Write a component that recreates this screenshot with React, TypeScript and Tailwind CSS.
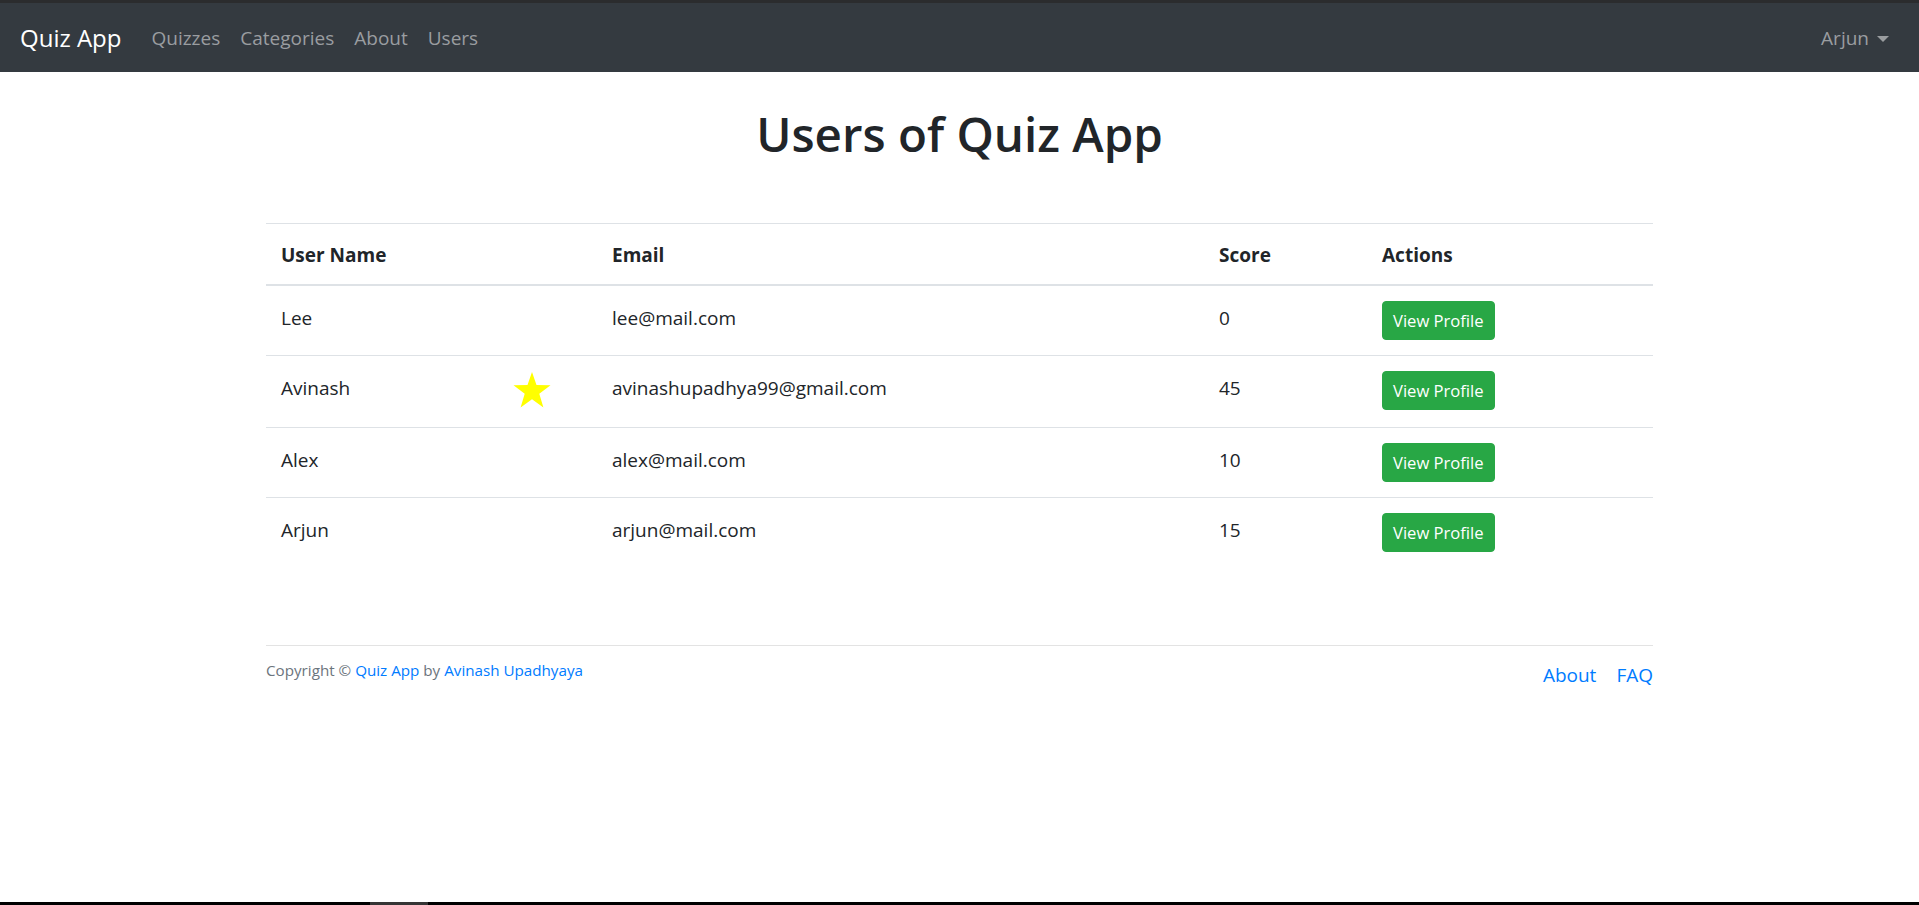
import React from "react";

const users = [
  { name: "Lee", email: "lee@mail.com", score: 0, star: false },
  { name: "Avinash", email: "avinashupadhya99@gmail.com", score: 45, star: true },
  { name: "Alex", email: "alex@mail.com", score: 10, star: false },
  { name: "Arjun", email: "arjun@mail.com", score: 15, star: false },
];

function Star() {
  return (
    <svg width="38" height="36" viewBox="0 0 38 36" className="block mt-[-1px]">
      <polygon
        points="19,0 23.5,13 37.5,13.3 26.3,21.7 30.4,35.5 19,27.3 7.6,35.5 11.7,21.7 0.5,13.3 14.5,13"
        fill="#ffff00"
      />
    </svg>
  );
}

const cell = "pt-[17px] pb-[14px] px-[15px] align-top";

export default function App() {
  return (
    <div className="min-h-[905px] flex flex-col bg-white text-[#212529] font-['Segoe_UI','Open_Sans',sans-serif]">
      <div className="h-[3px] bg-[#2b2c2e]" />
      <nav className="h-[69px] bg-[#343a40] flex items-center px-[20px]">
        <span className="text-[24px] leading-[37px] text-white mr-[20px]">Quiz App</span>
        <a className="px-[10px] text-[19px] leading-[30px] text-[#9a9da0]">Quizzes</a>
        <a className="px-[10px] text-[19px] leading-[30px] text-[#9a9da0]">Categories</a>
        <a className="px-[10px] text-[19px] leading-[30px] text-[#9a9da0]">About</a>
        <a className="px-[10px] text-[19px] leading-[30px] text-[#9a9da0]">Users</a>
        <a className="ml-auto px-[10px] text-[19px] leading-[30px] text-[#9a9da0] flex items-center">
          Arjun
          <span className="ml-[8px] mt-[2px] w-0 h-0 border-t-[6px] border-t-[#9a9da0] border-x-[6px] border-x-transparent" />
        </a>
      </nav>

      <main className="flex-1">
        <h1 className="mt-[32px] text-center text-[47.5px] leading-[60px] font-semibold">Users of Quiz App</h1>

        <table className="mt-[59px] mx-auto w-[1387px] table-fixed border-collapse text-[19px] leading-[30px]">
          <colgroup>
            <col className="w-[331px]" />
            <col className="w-[607px]" />
            <col className="w-[163px]" />
            <col className="w-[286px]" />
          </colgroup>
          <thead>
            <tr>
              {["User Name", "Email", "Score", "Actions"].map((h) => (
                <th
                  key={h}
                  className="text-left font-bold pt-[16px] pb-[14px] px-[15px] border-t border-t-[#dee2e6] border-b-2 border-b-[#dee2e6]"
                >
                  {h}
                </th>
              ))}
            </tr>
          </thead>
          <tbody>
            {users.map((u, i) => {
              const b = i > 0 ? " border-t border-t-[#dee2e6]" : "";
              return (
                <tr key={u.name}>
                  <td className={cell + b}>
                    <div className="flex">
                      <span className="w-[232px]">{u.name}</span>
                      {u.star && (
                        <div className="h-[40px]">
                          <Star />
                        </div>
                      )}
                    </div>
                  </td>
                  <td className={cell + b}>{u.email}</td>
                  <td className={cell + b}>{u.score}</td>
                  <td className={"p-[15px] align-top" + b}>
                    <button className="h-[39px] px-[10px] bg-[#28a745] border border-[#28a745] rounded-[4px] text-white text-[16.6px] leading-[26px]">
                      View Profile
                    </button>
                  </td>
                </tr>
              );
            })}
          </tbody>
        </table>

        <footer className="mt-[78px] mx-auto w-[1387px] border-t border-t-[#e3e3e3] flex justify-between items-start">
          <p className="pt-[12px] text-[15.2px] leading-[24px] text-[#6c757d]">
            Copyright © <a className="text-[#007bff]">Quiz App</a> by{" "}
            <a className="text-[#007bff]">Avinash Upadhyaya</a>
          </p>
          <div className="pt-[14px] flex gap-[20px] text-[19px] leading-[30px] text-[#007bff]">
            <a>About</a>
            <a>FAQ</a>
          </div>
        </footer>
      </main>

      <div className="h-[3px] bg-black flex">
        <div className="ml-[370px] w-[58px] bg-[#353535]" />
      </div>
    </div>
  );
}
